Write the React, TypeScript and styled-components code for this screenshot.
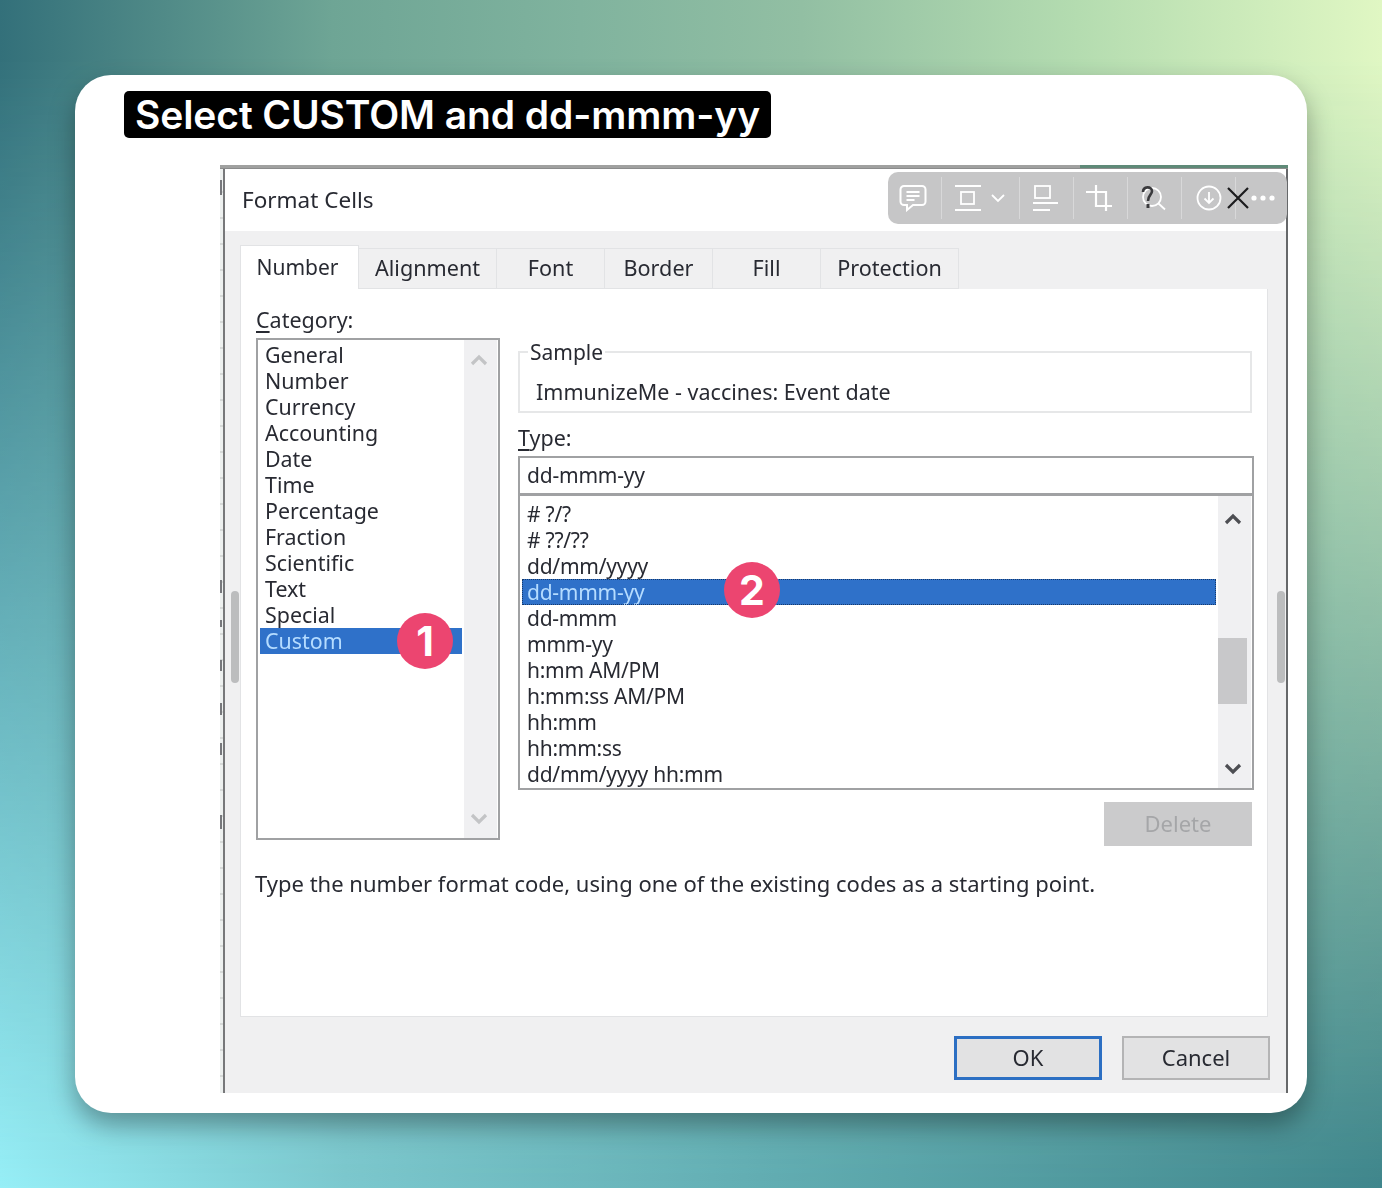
import React from 'react';
import styled, { createGlobalStyle } from 'styled-components';

const Global = createGlobalStyle`
  html, body { margin: 0; padding: 0; }
  body { width: 1382px; height: 1188px; overflow: hidden; font-family: "Noto Sans", sans-serif; }
`;
const Page = styled.div`
  position: relative; width: 1382px; height: 1188px; box-sizing: border-box; padding: 75px;
  background: linear-gradient(to right, #97eff7 0%, #7cc8ce 25%, #62aeb3 55%, #3f868c 100%);
  &::before {
    content: ''; position: absolute; inset: 0;
    background: linear-gradient(to right, #33707a 0%, #6ea595 24%, #80b39e 42%, #92bfa3 58%, #b4dcb0 78%, #e0f7c3 100%);
    -webkit-mask-image: linear-gradient(to bottom, #000 0%, #000 5%, transparent 100%);
    mask-image: linear-gradient(to bottom, #000 0%, #000 5%, transparent 100%);
  }
`;
const Card = styled.div`
  position: relative; width: 1232px; height: 1038px; background: #fff; border-radius: 36px;
  box-sizing: border-box; padding: 16px 0 20px 49px;
  box-shadow: 0 12px 26px rgba(0,0,0,.34); display: flex; flex-direction: column; align-items: flex-start;
`;
const Title = styled.h1`
  margin: 0; height: 47px; background: #000; color: #fff; border-radius: 5px; box-sizing: border-box; padding: 0 11px;
  font: 600 39px/47px Inter, sans-serif; letter-spacing: -0.1px; white-space: nowrap;
`;
const Shot = styled.div`
  position: relative; margin: 27px 0 0 96px; width: 1068px; height: 928px; box-sizing: border-box;
  padding: 4px 2px 0 5px; display: flex; flex-direction: column;
  color: #282a32; font: 400 22px/26px "Noto Sans", sans-serif;
  background:
    linear-gradient(to right, #a0a1a0 0 860px, #5f8a78 860px) top / 100% 3px no-repeat,
    linear-gradient(#8b8c8c, #8b8c8c) top / 100% 4px no-repeat,
    linear-gradient(to right, transparent 0 3px, #77787a 3px 5px, transparent 5px) left / 5px 100% no-repeat,
    linear-gradient(to bottom,
      transparent 15px, #77787c 15px 30px, transparent 30px 415px, #77787c 415px 428px,
      transparent 428px 455px, #77787c 455px 462px, transparent 462px 495px, #77787c 495px 506px,
      transparent 506px 538px, #77787c 538px 550px, transparent 550px 578px, #77787c 578px 590px,
      transparent 590px 650px, #77787c 650px 664px, transparent 664px) left / 2px 100% no-repeat,
    repeating-linear-gradient(to bottom, #d6d9d8 0 2px, #edf0ef 2px 26px) left / 3px 100% no-repeat,
    linear-gradient(#66686a, #66686a) right / 2px 100% no-repeat,
    #f0f0f1;
`;
const TitleBar = styled.div`
  height: 62px; flex: none; background: #fff; padding: 0 17px 1px; box-sizing: border-box; display: flex; align-items: center; font-size: 22.5px;
  filter: blur(0.45px);
`;
const Body = styled.div`
  padding: 14px 15px 0 15px; display: flex; flex-direction: column; filter: blur(0.45px);
`;
const Tabs = styled.div`display: flex; height: 44px; align-items: flex-end;`;
const Tab = styled.div<{ $active?: boolean; $w: number }>`
  width: ${p => p.$w}px; height: ${p => (p.$active ? 44 : 41)}px; box-sizing: border-box; flex: none;
  padding: 0 ${p => (p.$active ? 4 : 0)}px ${p => (p.$active ? 2 : 1)}px 0;
  display: flex; align-items: center; justify-content: center;
  background: ${p => (p.$active ? '#fff' : '#f0f0f1')};
  border: 1px solid #e2e3e5; border-bottom: ${p => (p.$active ? 'none' : '1px solid #e2e3e5')};
  border-left: ${p => (p.$active ? '1px solid #e2e3e5' : 'none')};
  font-size: ${p => (p.$active ? 21 : 21.6)}px;
`;
const Panel = styled.div`
  width: 1028px; height: 728px; box-sizing: border-box; background: #fff; border: 1px solid #e2e3e5; border-top: none;
  padding: 17px 15px 0 15px; display: flex; flex-direction: column;
`;
const Columns = styled.div`display: flex; gap: 18px; height: 541px; flex: none;`;
const LeftCol = styled.div`width: 244px; flex: none;`;
const RightCol = styled.div`width: 736px; flex: none; display: flex; flex-direction: column; & > * { flex: none; }`;
const Label = styled.div`
  height: 32px; line-height: 28px; font-size: 21.5px;
  u { text-underline-offset: 3px; text-decoration-thickness: 2px; }
`;
const CatBox = styled.div`
  width: 244px; height: 502px; box-sizing: border-box; border: 2px solid #a0a1a3; display: flex; background: #fff;
`;
const Row = styled.div<{ $sel?: boolean; $dotted?: boolean }>`
  height: 26px; line-height: 26px; box-sizing: border-box; padding-left: 5px; white-space: nowrap;
  background: ${p => (p.$sel ? '#2f71c9' : 'transparent')};
  color: ${p => (p.$sel ? '#b5dcff' : 'inherit')};
  outline: ${p => (p.$dotted ? '1px dotted #16396b' : 'none')};
  outline-offset: -1px;
`;
const CatRows = styled.div`flex: 1; min-width: 0; padding: 2px 2px 0 2px; font-size: 21.4px;`;
const Scroll = styled.div<{ $pt: number; $pb: number; $pr: number }>`
  position: relative; width: 33px; flex: none; margin-right: 1px; background: #f0f0f2; box-sizing: border-box;
  display: flex; flex-direction: column; justify-content: space-between; align-items: center;
  padding: ${p => p.$pt}px ${p => p.$pr}px ${p => p.$pb}px 0;
`;
const Thumb = styled.div`
  position: absolute; left: 0; width: 29px; top: 142px; height: 66px; background: #c8c8ca;
`;
const Sample = styled.fieldset`
  margin: 33px 0 0; padding: 0 0 0 16px; height: 74px; width: 734px; box-sizing: border-box; border: 2px solid #e6e7e8;
  legend { margin-left: -8px; padding: 0 2px; line-height: 26px; height: 26px; font-size: 21px; }
  div { margin-top: 14px; font-size: 21.5px; white-space: nowrap; }
`;
const TypeLabel = styled(Label)`margin-top: 11px;`;
const Input = styled.div`
  width: 736px; height: 40px; box-sizing: border-box; border: 2px solid #a0a1a3; border-bottom-width: 3px;
  padding-left: 7px; line-height: 35px; background: #fff; font-size: 21px; letter-spacing: -0.2px;
`;
const TypeBox = styled.div`
  width: 736px; height: 294px; box-sizing: border-box; border: 2px solid #a0a1a3; border-top: none; display: flex; background: #fff;
`;
const TypeRows = styled.div`flex: 1; padding: 5px 2px 0 2px; min-width: 0; font-size: 21px; letter-spacing: -0.25px;`;
const DelRow = styled.div`display: flex; justify-content: flex-end; padding: 12px 2px 0 0;`;
const Btn = styled.div<{ $kind?: 'ok' | 'disabled' }>`
  width: 148px; height: 44px; box-sizing: border-box; flex: none; display: flex; align-items: center; justify-content: center;
  padding-bottom: 2px;
  background: ${p => (p.$kind === 'disabled' ? '#cbcbcc' : '#e2e2e3')};
  color: ${p => (p.$kind === 'disabled' ? '#a5a6a8' : 'inherit')};
  border: ${p => (p.$kind === 'ok' ? '3px solid #2c6fc3' : p.$kind === 'disabled' ? 'none' : '2px solid #b4b4b5')};
`;
const Hint = styled.div`margin: 23px 0 0 -1px; font-size: 22px; white-space: nowrap;`;
const Footer = styled.div`display: flex; justify-content: flex-end; gap: 20px; padding: 19px 0 0 0; width: 1030px;`;
const Toolbar = styled.div`
  position: absolute; left: 668px; top: 7px; width: 399px; height: 52px; background: #c6c6c7; border-radius: 10px;
  display: flex; align-items: center; color: #fff;
`;
const Cell = styled.div<{ $w: number; $line?: boolean; $gap?: number; $pl?: number; $pr?: number }>`
  position: relative; width: ${p => p.$w}px; height: 42px; flex: none; display: flex; align-items: center; justify-content: center;
  gap: ${p => p.$gap ?? 0}px; box-sizing: border-box; padding: 0 ${p => p.$pr ?? 0}px 0 ${p => p.$pl ?? 0}px;
  border-right: ${p => (p.$line ? '1px solid #d8d8d9' : 'none')};
`;
const CloseMark = styled.svg`position: absolute; left: 43px; top: 8px;`;
const Badge = styled.div<{ $x: number; $y: number }>`
  position: absolute; left: ${p => p.$x}px; top: ${p => p.$y}px; width: 56px; height: 56px; border-radius: 50%;
  background: #ec4570; color: #fff; font: 700 41px/56px Inter, sans-serif; text-align: center;
`;
const EdgeBar = styled.div<{ $x: number }>`
  position: absolute; left: ${p => p.$x}px; top: 426px; width: 8px; height: 92px; border-radius: 4px; background: #bcbdbe;
`;

const Chevron = ({ up, color = '#c3c4c6' }: { up?: boolean; color?: string }) => (
  <svg width="18" height="12" viewBox="0 0 18 12" fill="none">
    <path d={up ? 'M2 10 L9 3 L16 10' : 'M2 2 L9 9 L16 2'} stroke={color} strokeWidth="3.2" />
  </svg>
);

const cat = ['General','Number','Currency','Accounting','Date','Time','Percentage','Fraction','Scientific','Text','Special','Custom'];
const types = ['# ?/?','# ??/??','dd/mm/yyyy','dd-mmm-yy','dd-mmm','mmm-yy','h:mm AM/PM','h:mm:ss AM/PM','hh:mm','hh:mm:ss','dd/mm/yyyy hh:mm'];

export default function App() {
  return (
    <Page>
      <Global />
      <Card>
        <Title>Select CUSTOM and dd-mmm-yy</Title>
        <Shot>
          <TitleBar>Format Cells</TitleBar>
          <Body>
            <Tabs>
              <Tab $active $w={119}>Number</Tab>
              <Tab $w={138}>Alignment</Tab>
              <Tab $w={108}>Font</Tab>
              <Tab $w={108}>Border</Tab>
              <Tab $w={108}>Fill</Tab>
              <Tab $w={138}>Protection</Tab>
            </Tabs>
            <Panel>
              <Columns>
                <LeftCol>
                  <Label><u>C</u>ategory:</Label>
                  <CatBox>
                    <CatRows>
                      {cat.map(c => <Row key={c} $sel={c === 'Custom'}>{c}</Row>)}
                    </CatRows>
                    <Scroll $pt={14} $pb={13} $pr={4}><Chevron up /><Chevron /></Scroll>
                  </CatBox>
                </LeftCol>
                <RightCol>
                  <Sample>
                    <legend>Sample</legend>
                    <div>ImmunizeMe - vaccines: Event date</div>
                  </Sample>
                  <TypeLabel><u>T</u>ype:</TypeLabel>
                  <Input>dd-mmm-yy</Input>
                  <TypeBox>
                    <TypeRows>
                      {types.map(t => <Row key={t} $sel={t === 'dd-mmm-yy'} $dotted={t === 'dd-mmm-yy'}>{t}</Row>)}
                    </TypeRows>
                    <Scroll $pt={17} $pb={13} $pr={3}>
                      <Chevron up color="#4d4e53" />
                      <Thumb />
                      <Chevron color="#4d4e53" />
                    </Scroll>
                  </TypeBox>
                  <DelRow><Btn $kind="disabled">Delete</Btn></DelRow>
                </RightCol>
              </Columns>
              <Hint>Type the number format code, using one of the existing codes as a starting point.</Hint>
            </Panel>
            <Footer>
              <Btn $kind="ok">OK</Btn>
              <Btn>Cancel</Btn>
            </Footer>
          </Body>
          <EdgeBar $x={11} />
          <EdgeBar $x={1057} />
          <Badge $x={177} $y={448}>1</Badge>
          <Badge $x={504} $y={397}>2</Badge>
          <Toolbar>
            <Cell $w={54} $line $pr={3}>
              <svg width="28" height="28" viewBox="0 0 28 28" fill="none" stroke="currentColor" strokeWidth="2"><path d="M5 2h18a3.5 3.5 0 0 1 3.5 3.5v12a3.5 3.5 0 0 1-3.5 3.5H14l-6 5v-5H5a3.5 3.5 0 0 1-3.5-3.5v-12A3.5 3.5 0 0 1 5 2z"/><path d="M7.5 8h13M7.5 12h13M7.5 16h8"/></svg>
            </Cell>
            <Cell $w={78} $line $gap={10} $pr={1}>
              <svg width="26" height="26" viewBox="0 0 26 26" fill="none" stroke="currentColor" strokeWidth="1.8"><path d="M0 1h26M0 25h26"/><rect x="6" y="7" width="13" height="12"/></svg>
              <svg width="14" height="9" viewBox="0 0 14 9" fill="none" stroke="currentColor" strokeWidth="1.8"><path d="M1 1l6 6 6-6"/></svg>
            </Cell>
            <Cell $w={54} $line $pr={2}>
              <svg width="25" height="26" viewBox="0 0 25 26" fill="none" stroke="currentColor" strokeWidth="1.8"><rect x="2" y="1" width="15" height="12"/><path d="M0 18h25M0 25h17"/></svg>
            </Cell>
            <Cell $w={54} $line $pr={4}>
              <svg width="26" height="26" viewBox="0 0 26 26" fill="none" stroke="currentColor" strokeWidth="2.2"><path d="M0 7h20v19M10 0v21h16"/></svg>
            </Cell>
            <Cell $w={54} $line>
              <svg width="28" height="28" viewBox="0 0 28 28" fill="none"><circle cx="11" cy="13" r="9" stroke="#fff" strokeWidth="1.8"/><path d="M17.5 19.5l6.5 6" stroke="#fff" strokeWidth="1.8"/><path d="M2 8c0-6 9-6 9-1 0 4-4 4-4 10" stroke="#3a3a3d" strokeWidth="2.6"/><path d="M7 20v4" stroke="#3a3a3d" strokeWidth="3"/></svg>
            </Cell>
            <Cell $w={54} $line>
              <svg width="26" height="26" viewBox="0 0 26 26" fill="none" stroke="#fff" strokeWidth="1.8"><circle cx="13" cy="13" r="11.5"/><path d="M13 7v11M8.5 13.5l4.5 4.5 4.5-4.5"/></svg>
              <CloseMark width="26" height="26" viewBox="0 0 26 26" fill="none" stroke="#1c1c1e" strokeWidth="2.2"><path d="M3 3l20 20M23 3L3 23"/></CloseMark>
            </Cell>
            <Cell $w={51} $pl={2}>
              <svg width="24" height="6" viewBox="0 0 24 6" fill="#fff"><circle cx="3" cy="3" r="2.6"/><circle cx="12" cy="3" r="2.6"/><circle cx="21" cy="3" r="2.6"/></svg>
            </Cell>
          </Toolbar>
        </Shot>
      </Card>
    </Page>
  );
}
